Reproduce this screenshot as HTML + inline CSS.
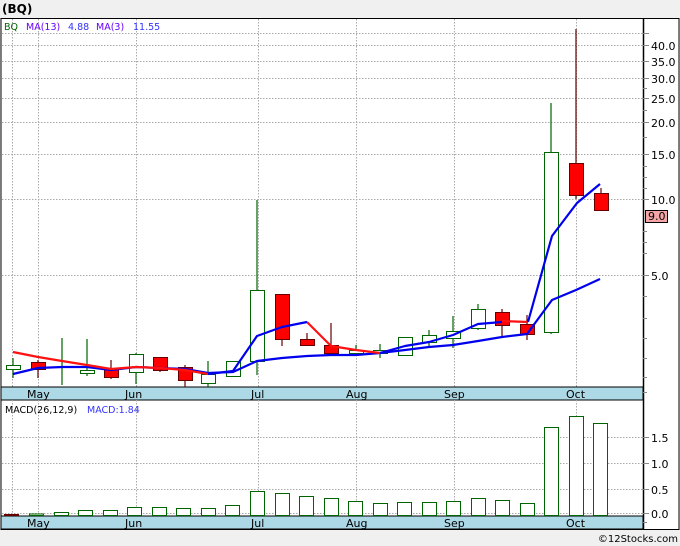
<!DOCTYPE html>
<html><head><style>
html,body{margin:0;padding:0;background:#f0f0f0;width:680px;height:546px;overflow:hidden}
svg{display:block}
text{font-family:"DejaVu Sans","Liberation Sans",sans-serif}
</style></head><body>
<svg width="680" height="546" xmlns="http://www.w3.org/2000/svg">
<rect x="0" y="0" width="680" height="546" fill="#f0f0f0"/>
<text x="2" y="13" font-size="12" font-weight="bold" fill="#000">(BQ)</text>
<rect x="1" y="18.5" width="678" height="511" fill="#fff" stroke="#000" stroke-width="1"/>
<rect x="1" y="387" width="642" height="13" fill="#add8e6" stroke="#000" stroke-width="1"/>
<rect x="1" y="516" width="642" height="13" fill="#add8e6" stroke="#000" stroke-width="1"/>
<line x1="643.5" y1="18" x2="643.5" y2="530" stroke="#000" stroke-width="1.5"/>
<g stroke="#aaa" stroke-dasharray="1.5,1.5" stroke-width="1">
<line x1="12.5" y1="19" x2="12.5" y2="387"/><line x1="38.5" y1="19" x2="38.5" y2="387"/><line x1="136.5" y1="19" x2="136.5" y2="387"/><line x1="258.5" y1="19" x2="258.5" y2="387"/><line x1="356.5" y1="19" x2="356.5" y2="387"/><line x1="454.5" y1="19" x2="454.5" y2="387"/><line x1="576.5" y1="19" x2="576.5" y2="387"/>
<line x1="12.5" y1="400" x2="12.5" y2="516"/><line x1="38.5" y1="400" x2="38.5" y2="516"/><line x1="136.5" y1="400" x2="136.5" y2="516"/><line x1="258.5" y1="400" x2="258.5" y2="516"/><line x1="356.5" y1="400" x2="356.5" y2="516"/><line x1="454.5" y1="400" x2="454.5" y2="516"/><line x1="576.5" y1="400" x2="576.5" y2="516"/>
<line x1="2" y1="33.5" x2="643" y2="33.5"/><line x1="2" y1="45.5" x2="643" y2="45.5"/><line x1="2" y1="61.5" x2="643" y2="61.5"/><line x1="2" y1="78.5" x2="643" y2="78.5"/><line x1="2" y1="98.5" x2="643" y2="98.5"/><line x1="2" y1="122.5" x2="643" y2="122.5"/><line x1="2" y1="154.5" x2="643" y2="154.5"/><line x1="2" y1="199.5" x2="643" y2="199.5"/><line x1="2" y1="275.5" x2="643" y2="275.5"/>
<line x1="2" y1="437.5" x2="643" y2="437.5"/><line x1="2" y1="463.5" x2="643" y2="463.5"/><line x1="2" y1="489.5" x2="643" y2="489.5"/><line x1="2" y1="513.5" x2="643" y2="513.5"/>
</g>
<g stroke="#888" stroke-width="1">
<line x1="643" y1="33.5" x2="649" y2="33.5"/><line x1="643" y1="45.5" x2="649" y2="45.5"/><line x1="643" y1="61.5" x2="649" y2="61.5"/><line x1="643" y1="78.5" x2="649" y2="78.5"/><line x1="643" y1="88.5" x2="647" y2="88.5"/><line x1="643" y1="98.5" x2="649" y2="98.5"/><line x1="643" y1="110.5" x2="647" y2="110.5"/><line x1="643" y1="122.5" x2="649" y2="122.5"/><line x1="643" y1="137.5" x2="647" y2="137.5"/><line x1="643" y1="154.5" x2="649" y2="154.5"/><line x1="643" y1="166.5" x2="647" y2="166.5"/><line x1="643" y1="177.5" x2="647" y2="177.5"/><line x1="643" y1="188.5" x2="647" y2="188.5"/><line x1="643" y1="199.5" x2="649" y2="199.5"/><line x1="643" y1="231.5" x2="647" y2="231.5"/><line x1="643" y1="242.5" x2="647" y2="242.5"/><line x1="643" y1="253.5" x2="647" y2="253.5"/><line x1="643" y1="275.5" x2="649" y2="275.5"/><line x1="643" y1="296.5" x2="647" y2="296.5"/><line x1="643" y1="318.5" x2="647" y2="318.5"/><line x1="643" y1="338.5" x2="647" y2="338.5"/><line x1="643" y1="358.5" x2="647" y2="358.5"/><line x1="643" y1="377.5" x2="647" y2="377.5"/>
<line x1="643" y1="392.5" x2="647" y2="392.5"/>
<line x1="643" y1="437.5" x2="649" y2="437.5"/><line x1="643" y1="463.5" x2="649" y2="463.5"/><line x1="643" y1="489.5" x2="649" y2="489.5"/><line x1="643" y1="513.5" x2="649" y2="513.5"/><line x1="643" y1="522.5" x2="647" y2="522.5"/>
</g>
<g font-size="11" fill="#000">
<text x="651" y="50">40.0</text><text x="651" y="66">35.0</text><text x="651" y="83">30.0</text><text x="651" y="103">25.0</text><text x="651" y="127">20.0</text><text x="651" y="159">15.0</text><text x="651" y="204">10.0</text><text x="651" y="280">5.0</text>
<text x="651" y="442">1.5</text><text x="651" y="468">1.0</text><text x="651" y="494">0.5</text><text x="651" y="518">0.0</text>
</g>
<rect x="645.5" y="210.5" width="22" height="12" fill="#f4a6a6" stroke="#000"/>
<text x="648" y="220" font-size="11">9.0</text>
<g font-size="11" fill="#000">
<text x="27" y="398">May</text><text x="125" y="398">Jun</text><text x="251" y="398">Jul</text><text x="346" y="398">Aug</text><text x="444" y="398">Sep</text><text x="566" y="398">Oct</text>
<text x="27" y="527">May</text><text x="125" y="527">Jun</text><text x="251" y="527">Jul</text><text x="346" y="527">Aug</text><text x="444" y="527">Sep</text><text x="566" y="527">Oct</text>
</g>
<text x="4" y="30" font-size="9.5" fill="#006400">BQ</text>
<text x="26" y="30" font-size="9.5" fill="#6600ff">MA(13)</text>
<text x="68" y="30" font-size="9.5" fill="#3333ff">4.88</text>
<text x="96" y="30" font-size="9.5" fill="#6600ff">MA(3)</text>
<text x="133" y="30" font-size="9.5" fill="#3333ff">11.55</text>
<text x="5" y="413" font-size="9.5" fill="#000">MACD(26,12,9)</text>
<text x="87" y="413" font-size="9.5" fill="#3333ff">MACD:1.84</text>
<g stroke-width="1.2">
<line x1="13" y1="358" x2="13" y2="378" stroke="#006400"/>
<line x1="38" y1="360" x2="38" y2="378" stroke="#600"/>
<line x1="62" y1="338" x2="62" y2="385" stroke="#006400"/>
<line x1="87" y1="339" x2="87" y2="376" stroke="#006400"/>
<line x1="111" y1="360" x2="111" y2="379" stroke="#600"/>
<line x1="136" y1="353" x2="136" y2="384" stroke="#006400"/>
<line x1="160" y1="357" x2="160" y2="372" stroke="#600"/>
<line x1="185" y1="365" x2="185" y2="387" stroke="#600"/>
<line x1="208" y1="361" x2="208" y2="387" stroke="#006400"/>
<line x1="233" y1="361" x2="233" y2="376" stroke="#006400"/>
<line x1="257" y1="200" x2="257" y2="375" stroke="#006400"/>
<line x1="282" y1="294" x2="282" y2="346" stroke="#600"/>
<line x1="307" y1="333" x2="307" y2="346" stroke="#600"/>
<line x1="331" y1="323" x2="331" y2="355" stroke="#600"/>
<line x1="356" y1="345" x2="356" y2="356" stroke="#006400"/>
<line x1="380" y1="344" x2="380" y2="358" stroke="#006400"/>
<line x1="405" y1="337" x2="405" y2="355" stroke="#006400"/>
<line x1="429" y1="330" x2="429" y2="346" stroke="#006400"/>
<line x1="453" y1="316" x2="453" y2="348" stroke="#006400"/>
<line x1="478" y1="304" x2="478" y2="330" stroke="#006400"/>
<line x1="502" y1="309" x2="502" y2="336" stroke="#600"/>
<line x1="527" y1="315" x2="527" y2="340" stroke="#600"/>
<line x1="551" y1="103" x2="551" y2="334" stroke="#006400"/>
<line x1="576" y1="29" x2="576" y2="199" stroke="#600"/>
<line x1="601" y1="188" x2="601" y2="210" stroke="#600"/>
</g>
<g stroke="#006400" fill="#fff">
<rect x="6.5" y="365.5" width="14" height="4"/>
<rect x="80.5" y="370.5" width="14" height="3"/>
<rect x="129.5" y="354.5" width="14" height="18"/>
<rect x="201.5" y="374.5" width="14" height="9"/>
<rect x="226.5" y="361.5" width="14" height="15"/>
<rect x="250.5" y="290.5" width="14" height="71"/>
<rect x="349.5" y="350.5" width="14" height="3"/>
<rect x="373.5" y="350.5" width="14" height="3"/>
<rect x="398.5" y="337.5" width="14" height="18"/>
<rect x="422.5" y="335.5" width="14" height="7"/>
<rect x="446.5" y="331.5" width="14" height="7"/>
<rect x="471.5" y="309.5" width="14" height="19"/>
<rect x="544.5" y="152.5" width="14" height="180"/>
</g>
<g stroke="#600" fill="#f00">
<rect x="31.5" y="362.5" width="14" height="7"/>
<rect x="104.5" y="369.5" width="14" height="8"/>
<rect x="153.5" y="357.5" width="14" height="13"/>
<rect x="178.5" y="367.5" width="14" height="13"/>
<rect x="275.5" y="294.5" width="14" height="45"/>
<rect x="300.5" y="339.5" width="14" height="6"/>
<rect x="324.5" y="345.5" width="14" height="8"/>
<rect x="495.5" y="312.5" width="14" height="13"/>
<rect x="520.5" y="324.5" width="14" height="10"/>
<rect x="569.5" y="163.5" width="14" height="32"/>
<rect x="594.5" y="193.5" width="14" height="17"/>
</g>
<g fill="none" stroke-width="2.2" stroke-linejoin="round">
<polyline stroke="#0000ee" points="13,374 38,368 62,367 87,367 111,370 136,367 160,368 185,369 208,373 233,372 257,361 282,358 307,356 331,355 356,355 380,353 405,350 429,347 453,345 478,341 502,337 527,334 552,300 576,290 600,279"/>
<polyline stroke="#ff1111" points="13,352 38,357 62,361 87,365 111,369 136,367 160,368 185,370 208,374"/>
<polyline stroke="#ff1111" points="307,322 331,346 356,350 380,353"/>
<polyline stroke="#ff1111" points="502,321 528,322"/>
<polyline stroke="#0000ee" points="208,374 233,371 257,336 282,327 307,322"/>
<polyline stroke="#0000ee" points="380,353 405,346 429,342 453,335 478,324 502,322"/>
<polyline stroke="#0000ee" points="528,322 552,236 577,203 600,184"/>
</g>
<g stroke="#006400" fill="#fff" stroke-width="1">
<rect x="4.5" y="514.5" width="14" height="1" stroke="#600"/>
<rect x="29.5" y="514" width="14" height="1.5"/>
<rect x="54.5" y="512.5" width="14" height="3"/>
<rect x="78.5" y="510.5" width="14" height="5"/>
<rect x="103.5" y="510.5" width="14" height="5"/>
<rect x="127.5" y="507.5" width="14" height="8"/>
<rect x="152.5" y="507.5" width="14" height="8"/>
<rect x="176.5" y="508.5" width="14" height="7"/>
<rect x="201.5" y="508.5" width="14" height="7"/>
<rect x="225.5" y="505.5" width="14" height="10"/>
<rect x="250.5" y="491.5" width="14" height="24"/>
<rect x="275.5" y="493.5" width="14" height="22"/>
<rect x="299.5" y="496.5" width="14" height="19"/>
<rect x="324.5" y="498.5" width="14" height="17"/>
<rect x="348.5" y="501.5" width="14" height="14"/>
<rect x="373.5" y="503.5" width="14" height="12"/>
<rect x="397.5" y="502.5" width="14" height="13"/>
<rect x="422.5" y="502.5" width="14" height="13"/>
<rect x="446.5" y="501.5" width="14" height="14"/>
<rect x="471.5" y="498.5" width="14" height="17"/>
<rect x="495.5" y="500.5" width="14" height="15"/>
<rect x="520.5" y="503.5" width="14" height="12"/>
<rect x="544.5" y="427.5" width="14" height="88"/>
<rect x="569.5" y="416.5" width="14" height="99"/>
<rect x="593.5" y="423.5" width="14" height="92"/>
</g>
<text x="678" y="542" font-size="10" fill="#000" text-anchor="end">©12Stocks.com</text>
</svg>
</body></html>
